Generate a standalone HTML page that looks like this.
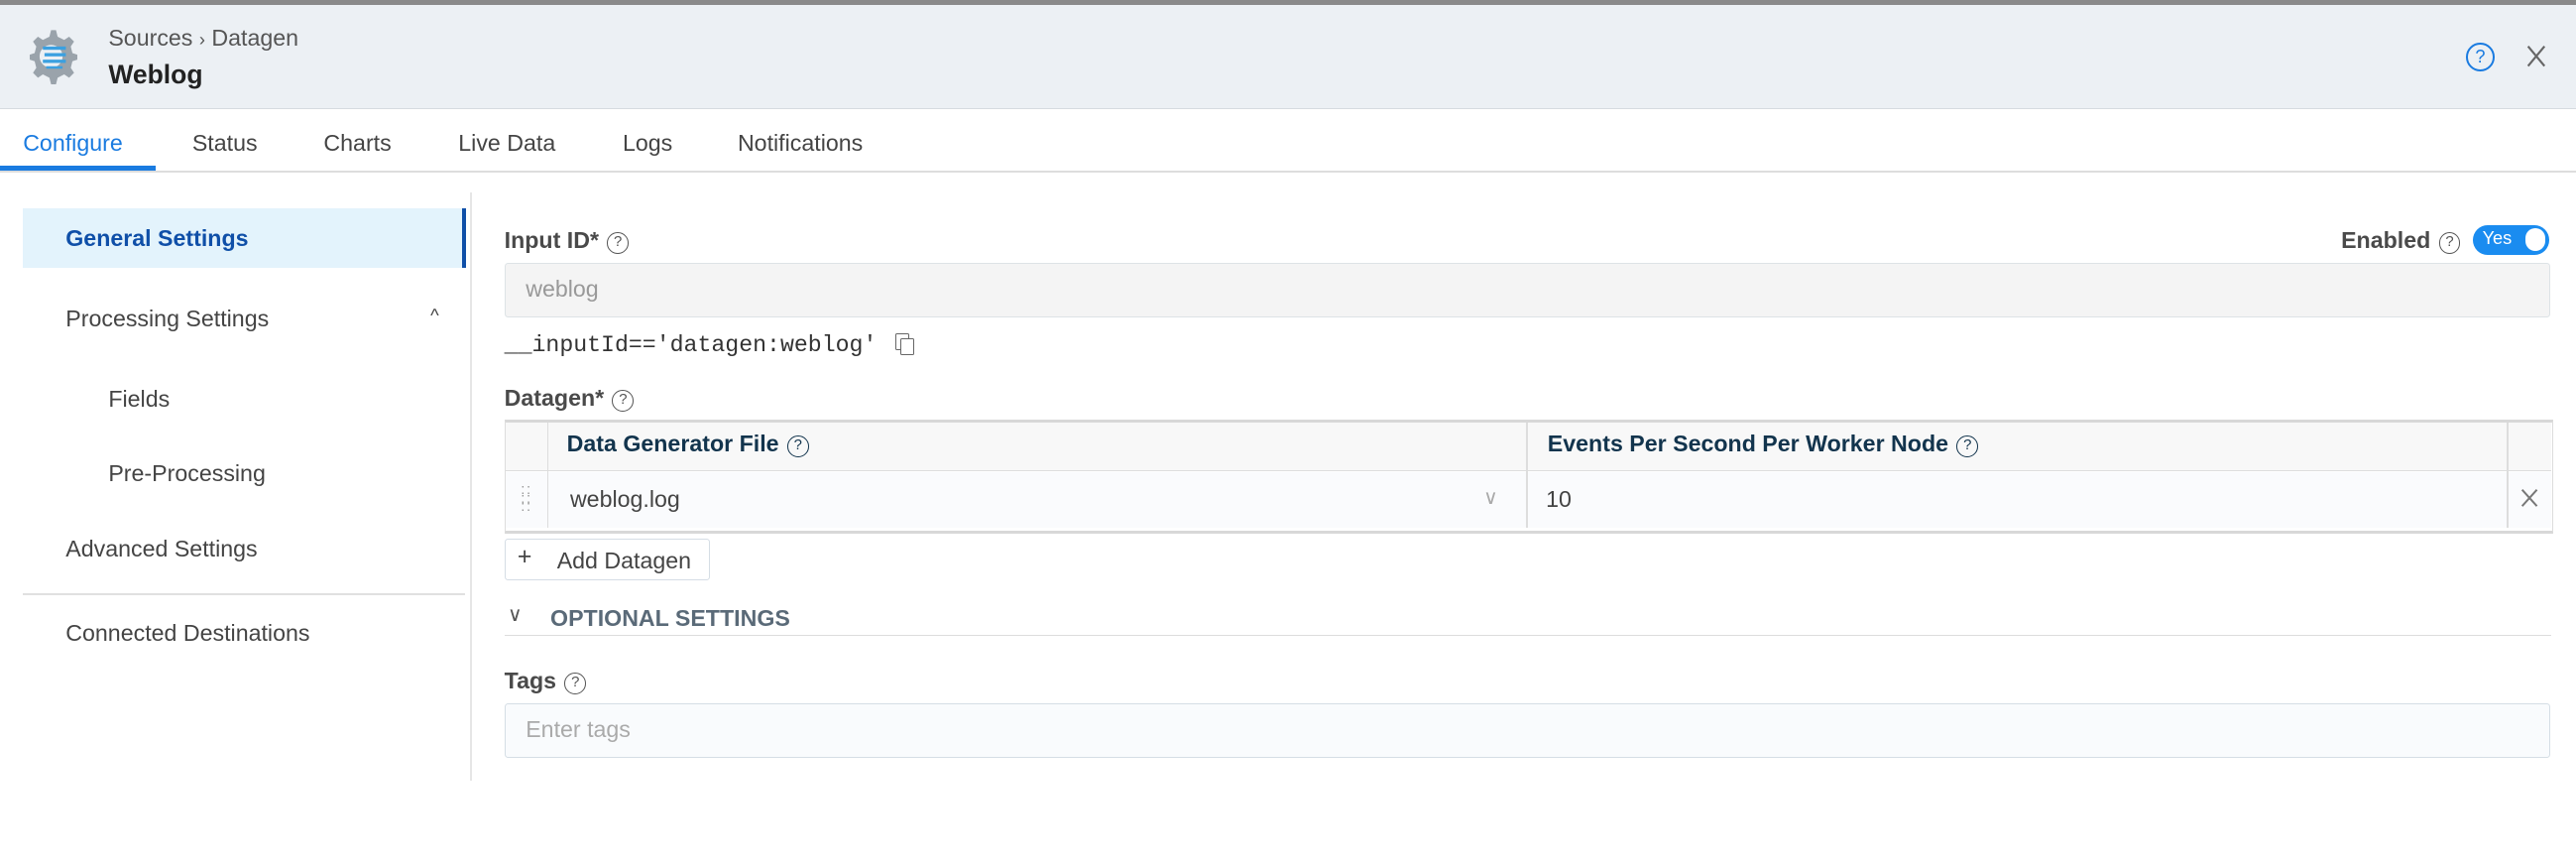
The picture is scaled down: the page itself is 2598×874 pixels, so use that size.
<!DOCTYPE html>
<html><head><meta charset="utf-8"><style>
html,body{margin:0;padding:0;background:#fff;width:2598px;height:874px;overflow:hidden}
#w{zoom:1.6569;width:1568px;height:527px;position:relative;font-family:"Liberation Sans",sans-serif;color:#444}
.a{position:absolute;white-space:nowrap}
.q{display:inline-block;width:12px;height:12px;border:1.2px solid #555;border-radius:50%;font-size:9px;line-height:12px;text-align:center;vertical-align:1px;margin-left:5px;color:#555;font-weight:400}
.lbl{font-size:14px;font-weight:bold;color:#4a4a4a}
.nav{font-size:14px;color:#444}
</style></head><body><div id="w">
<div class="a" style="left:0;top:0;width:1568px;height:3px;background:#8a8a8a"></div>
<div class="a" style="left:0;top:3px;width:1568px;height:63px;background:#ecf0f4;border-bottom:1px solid #d6dbe0"></div>
<svg class="a" style="left:15px;top:16px" width="32" height="36" viewBox="0 0 32 36">
<path d="M16 2l3 0 1 4 4 2 3-2 3 3-2 3 1 4 3 1v3l-3 1-1 4 2 3-3 3-3-2-4 2-1 4h-3l-1-4-4-2-3 2-3-3 2-3-1-4-3-1v-3l3-1 1-4-2-3 3-3 3 2 4-2z" fill="#9aa3ab"/>
<circle cx="16" cy="18" r="7" fill="#ecf0f4"/>
<rect x="11" y="12" width="14" height="2" fill="#3ba0e0"/><rect x="12" y="16" width="13" height="2" fill="#3ba0e0"/><rect x="11" y="20" width="14" height="2" fill="#3ba0e0"/><rect x="13" y="24" width="10" height="1.5" fill="#3ba0e0"/>
</svg>
<div class="a" style="left:66px;top:15px;font-size:14px;color:#555">Sources <span style="font-size:11px">›</span> Datagen</div>
<div class="a" style="left:66px;top:36px;font-size:16px;font-weight:bold;color:#222">Weblog</div>
<div class="a" style="left:1501px;top:26px;width:15px;height:15px;border:1.5px solid #1a7be0;border-radius:50%;color:#1a7be0;font-size:11px;line-height:15px;text-align:center">?</div>
<svg class="a" style="left:1538px;top:27px" width="12" height="14" viewBox="0 0 12 14"><path d="M1 1L11 13M11 1L1 13" stroke="#666" stroke-width="1.3"/></svg>
<div class="a" style="left:0;top:104px;width:1568px;height:1px;background:#ddd"></div>
<div class="a" style="left:0;top:101px;width:95px;height:3px;background:#1a7be0"></div>
<div class="a" style="left:14px;top:79px;font-size:14px;color:#1a7be0">Configure</div>
<div class="a" style="left:117px;top:79px;font-size:14px;color:#444">Status</div>
<div class="a" style="left:197px;top:79px;font-size:14px;color:#444">Charts</div>
<div class="a" style="left:279px;top:79px;font-size:14px;color:#444">Live Data</div>
<div class="a" style="left:379px;top:79px;font-size:14px;color:#444">Logs</div>
<div class="a" style="left:449px;top:79px;font-size:14px;color:#444">Notifications</div>
<div class="a" style="left:14px;top:127px;width:267px;height:36px;background:#e3f3fc;border-right:3px solid #0f4fa8"></div>
<div class="a" style="left:286px;top:117px;width:1px;height:358px;background:#e6e6e6"></div>
<div class="a nav" style="left:40px;top:137px;color:#0f4fa8;font-weight:bold">General Settings</div>
<div class="a nav" style="left:40px;top:186px">Processing Settings</div>
<div class="a" style="left:262px;top:186px;font-size:11px;color:#444">^</div>
<div class="a nav" style="left:66px;top:235px">Fields</div>
<div class="a nav" style="left:66px;top:280px">Pre-Processing</div>
<div class="a nav" style="left:40px;top:326px">Advanced Settings</div>
<div class="a" style="left:14px;top:361px;width:269px;height:1px;background:#e0e0e0"></div>
<div class="a nav" style="left:40px;top:377px">Connected Destinations</div>
<div class="a lbl" style="left:307px;top:138px">Input ID*<span class="q">?</span></div>
<div class="a lbl" style="left:1425px;top:138px">Enabled<span class="q">?</span></div>
<div class="a" style="left:1505px;top:137px;width:47px;height:18px;border-radius:9px;background:#1a8cf0"></div>
<div class="a" style="left:1511px;top:139px;font-size:11px;color:#fff">Yes</div>
<div class="a" style="left:1537px;top:139px;width:12px;height:14px;border-radius:7px;background:#fff"></div>
<div class="a" style="left:307px;top:160px;width:1244px;height:32px;background:#f4f4f4;border:1px solid #dde3e6;border-radius:2px"></div>
<div class="a" style="left:320px;top:168px;font-size:14px;color:#999">weblog</div>
<div class="a" style="left:307px;top:202px;font-family:'Liberation Mono',monospace;font-size:14px;color:#333">__inputId=='datagen:weblog'</div>
<div class="a" style="left:545px;top:203px;width:7px;height:9px;border:1px solid #666;border-radius:1px"></div>
<div class="a" style="left:548px;top:206px;width:7px;height:9px;border:1px solid #666;background:#fff;border-radius:1px"></div>
<div class="a lbl" style="left:307px;top:234px">Datagen*<span class="q">?</span></div>
<div class="a" style="left:307px;top:255px;width:1246px;height:66px;border:1px solid #ddd;border-top:2px solid #d8d8d8;border-bottom:2px solid #d8d8d8"></div>
<div class="a" style="left:308px;top:257px;width:1245px;height:29px;background:#f8f8f8;border-bottom:1px solid #ddd"></div>
<div class="a" style="left:308px;top:287px;width:1245px;height:34px;background:#fafbfd"></div>
<div class="a" style="left:333px;top:257px;width:1px;height:64px;background:#ddd"></div>
<div class="a" style="left:929px;top:257px;width:1px;height:64px;background:#ddd"></div>
<div class="a" style="left:1526px;top:257px;width:1px;height:64px;background:#ddd"></div>
<div class="a" style="left:345px;top:262px;font-size:14px;font-weight:bold;color:#12344d">Data Generator File<span class="q" style="border-color:#12344d;color:#12344d">?</span></div>
<div class="a" style="left:942px;top:262px;font-size:14px;font-weight:bold;color:#12344d">Events Per Second Per Worker Node<span class="q" style="border-color:#12344d;color:#12344d">?</span></div>
<div class="a" style="left:317px;top:296px;font-size:9px;line-height:5px;color:#999;letter-spacing:1px">::<br>::<br>::</div>
<div class="a" style="left:347px;top:296px;font-size:14px;color:#444">weblog.log</div>
<div class="a" style="left:903px;top:296px;font-size:12px;color:#aaa">∨</div>
<div class="a" style="left:941px;top:296px;font-size:14px;color:#444">10</div>
<svg class="a" style="left:1534px;top:297px" width="11" height="12" viewBox="0 0 11 12"><path d="M1 1L10 11M10 1L1 11" stroke="#777" stroke-width="1.2"/></svg>
<div class="a" style="left:307px;top:328px;width:124px;height:24px;border:1px solid #d5dde5;border-radius:2px"></div>
<div class="a" style="left:315px;top:331px;font-size:15px;color:#444">+</div>
<div class="a" style="left:339px;top:333px;font-size:14px;color:#444">Add Datagen</div>
<div class="a" style="left:309px;top:367px;font-size:12px;color:#555">∨</div>
<div class="a" style="left:335px;top:368px;font-size:14px;font-weight:bold;color:#5a6a78">OPTIONAL SETTINGS</div>
<div class="a" style="left:307px;top:386px;width:1246px;height:1px;background:#dcdcdc"></div>
<div class="a lbl" style="left:307px;top:406px">Tags<span class="q">?</span></div>
<div class="a" style="left:307px;top:428px;width:1244px;height:32px;background:#f9fbfd;border:1px solid #d5dee5;border-radius:2px"></div>
<div class="a" style="left:320px;top:436px;font-size:14px;color:#aaa">Enter tags</div>
</div></body></html>
